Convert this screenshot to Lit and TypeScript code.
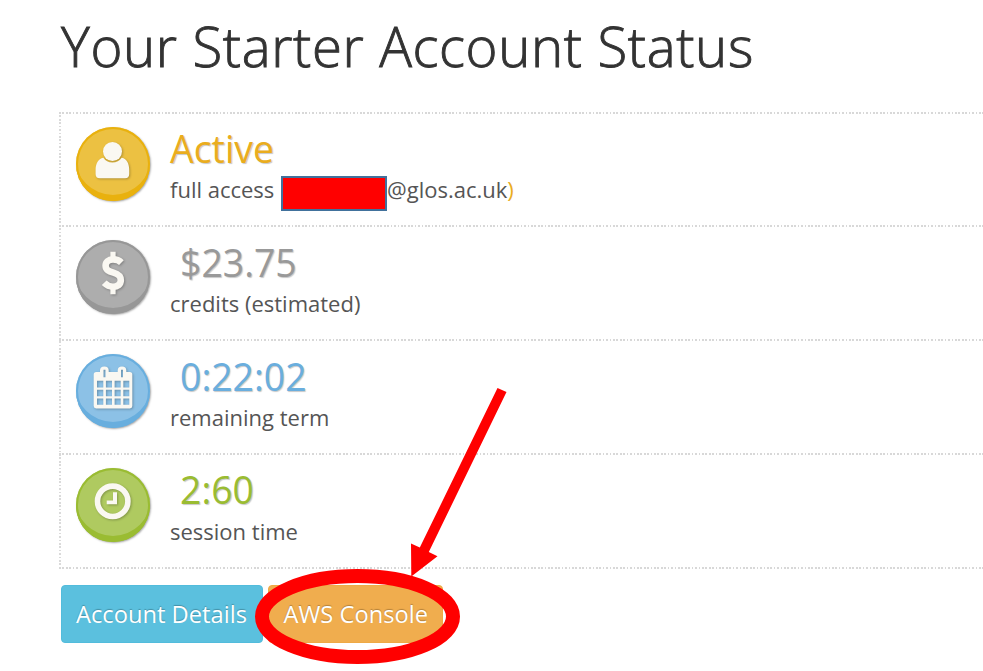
import { LitElement, html, css, svg } from "lit";
import { customElement } from "lit/decorators.js";

const icons = {
  user: svg`
    <path d="M27.3 30.7 Q30.5 35.4 36.4 35.4 Q42.5 35.4 45.7 30.7 C51 31.5 53.2 37 53.2 43 V47 Q53.2 51.2 49 51.2 H23.7 Q19.6 51.2 19.6 47 V43 C19.6 37 22 31.5 27.3 30.7Z"/>
    <ellipse cx="36.5" cy="24.5" rx="9.5" ry="9.4"/>`,
  usd: svg`
    <path d="M34.4 11.8 h5.2 v6 h-5.2z M34.4 48 h5.2 v6.3 h-5.2z"/>
    <path class="line thick" d="M45.4 22.6 C43 20.2 40.5 19.4 37 19.4 C32.3 19.4 29.6 22 29.6 25.6 C29.6 30.1 33 31.4 37.4 32.7 C42 34 44.8 35.7 44.8 40.3 C44.8 44.6 41.6 46.7 37 46.7 C33 46.7 30.5 45.2 28.2 42.8"/>`,
  calendar: svg`
    <path fill-rule="evenodd" d="M20.2 18 H24 V16.5 Q24 12.4 28.4 12.4 Q32.7 12.4 32.7 16.5 V18 H41.7 V16.5 Q41.7 12.4 46 12.4 Q50.3 12.4 50.3 16.5 V18 H53.8 Q56.3 18 56.3 20.5 V52 Q56.3 54.4 53.8 54.4 H20.2 Q17.7 54.4 17.7 52 V20.5 Q17.7 18 20.2 18Z
      M27.5 15.7 V23.3 H29.5 V15.7Z M45 15.7 V23.3 H47 V15.7Z
      M21 26.7 V33.5 H27.3 V26.7Z M29.9 26.7 V33.5 H36 V26.7Z M38.6 26.7 V33.5 H44.7 V26.7Z M47.3 26.7 V33.5 H53.3 V26.7Z
      M21 35.7 V42.3 H27.3 V35.7Z M29.9 35.7 V42.3 H36 V35.7Z M38.6 35.7 V42.3 H44.7 V35.7Z M47.3 35.7 V42.3 H53.3 V35.7Z
      M21 44.5 V50.7 H27.3 V44.5Z M29.9 44.5 V50.7 H36 V44.5Z M38.6 44.5 V50.7 H44.7 V44.5Z M47.3 44.5 V50.7 H53.3 V44.5Z"/>`,
  clock: svg`
    <circle class="line" cx="36.7" cy="33.3" r="15.2"/>
    <path d="M37 24.3 H41 V36.3 H30.7 V32.6 H37Z"/>`,
};

@customElement("app-root")
export class AppRoot extends LitElement {
  static styles = css`
    :host {
      display: block;
      position: relative;
      box-sizing: border-box;
      width: 983px;
      height: 671px;
      padding-left: 59px;
      overflow: hidden;
      background: #fff;
      color: #555;
      font-family: "Open Sans", "Noto Sans", sans-serif;
    }
    h1 {
      margin: 0;
      padding: 9px 0 0 2px;
      height: 111.6px;
      box-sizing: border-box;
      font-size: 54.5px;
      line-height: 74px;
      font-weight: 300;
      letter-spacing: 0.64px;
      -webkit-text-stroke: 0.9px #333;
      color: #333;
      white-space: nowrap;
    }
    .list {
      box-sizing: border-box;
      height: 457px;
      background:
        repeating-linear-gradient(180deg, #dadada 0 1.7px, #fff 1.7px 3.42px) 0 0 / 2px 100% no-repeat;
    }
    .row {
      display: flex;
      box-sizing: border-box;
      height: 111.75px;
      padding: 13px 0 0 17px;
      gap: 20px;
    }
    .rule {
      height: 2px;
      background: repeating-linear-gradient(90deg, #d8d8d8 0 1.7px, #fff 1.7px 3.42px);
    }
    .badge {
      flex: none;
      width: 74px;
      height: 74px;
      border-radius: 50%;
      box-shadow: inset 0 -7px 0 -1px var(--deep), inset 0 0 0 2px var(--deep), 1px 1px 2px rgba(0, 0, 0, 0.35);
      background: var(--face);
    }
    .badge svg {
      display: block;
      fill: #faf8f2;
      filter: drop-shadow(1px 1.5px 1px rgba(0, 0, 0, 0.25));
    }
    .line { fill: none; stroke: #faf8f2; stroke-width: 5.6; }
    .thick { stroke-width: 6.6; }
    .gold { --face: #ecc142; --deep: #e9b10e; --ink: #eaad1e; }
    .gray { --face: #adadad; --deep: #979797; --ink: #999; }
    .blue { --face: #8cc1e6; --deep: #68aede; --ink: #6aaede; }
    .green { --face: #afca60; --deep: #9abc32; --ink: #9abc32; }
    .value {
      height: 51px;
      margin-top: -3.5px;
      font-size: 37.4px;
      line-height: 51px;
      color: var(--ink);
      text-shadow: 1px 1px 1px rgba(0, 0, 0, 0.22);
      white-space: nowrap;
    }
    .indent { padding-left: 10px; }
    .label {
      display: flex;
      align-items: center;
      height: 30px;
      margin-top: 0.2px;
      font-size: 22px;
      line-height: 30px;
      white-space: nowrap;
    }
    .redacted {
      box-sizing: border-box;
      width: 106px;
      height: 35px;
      margin-top: 8.6px;
      border: 2px solid #41719c;
      background: #f00;
    }
    .access { width: 111px; }
    .paren { color: #eaad1e; }
    .actions {
      display: flex;
      gap: 4.5px;
      padding: 16.6px 0 0 2px;
    }
    .btn {
      box-sizing: border-box;
      width: 202px;
      height: 58px;
      padding: 0 1px 0 0;
      border: 1px solid #52bcdc;
      border-radius: 4px;
      background: #5bc0de;
      color: #fff;
      font: 400 23.7px/54px "Open Sans", sans-serif;
      text-align: center;
      white-space: nowrap;
      text-shadow: 0 -1px 1px rgba(0, 0, 0, 0.25);
    }
    .warn { width: 175.5px; padding: 0 0 0 1px; background: #f0ad4e; border-color: #efa945; }
    .marks { position: absolute; left: 0; top: 0; }
  `;

  row(tone: string, icon: unknown, value: string, label: unknown) {
    return html`
      <div class="row ${tone}">
        <div class="badge"><svg width="74" height="74" viewBox="0 0 74 74">${icon}</svg></div>
        <div>
          <div class="value ${tone === "gold" ? "" : "indent"}">${value}</div>
          <div class="label">${label}</div>
        </div>
      </div>
      <div class="rule"></div>`;
  }

  render() {
    return html`
      <h1>Your Starter Account Status</h1>
      <div class="list">
        <div class="rule"></div>
        ${this.row("gold", icons.user, "Active", html`<span class="access">full access</span><span class="redacted"></span><span>@glos.ac.uk</span><span class="paren">)</span>`)}
        ${this.row("gray", icons.usd, "$23.75", html`<span>credits (estimated)</span>`)}
        ${this.row("blue", icons.calendar, "0:22:02", html`<span>remaining term</span>`)}
        ${this.row("green", icons.clock, "2:60", html`<span>session time</span>`)}
      </div>
      <div class="actions">
        <button class="btn">Account Details</button>
        <button class="btn warn">AWS Console</button>
      </div>
      <svg class="marks" width="983" height="671" viewBox="0 0 983 671">
        <ellipse cx="357.5" cy="616.5" rx="95.5" ry="40.5" fill="none" stroke="#f00" stroke-width="14"/>
        <path fill="#f00" d="M497.5 388 L506.5 392 L428.8 552 L437.5 556.3 L411.3 576.5 L411 543.5 L419.8 547.6Z"/>
      </svg>`;
  }
}
